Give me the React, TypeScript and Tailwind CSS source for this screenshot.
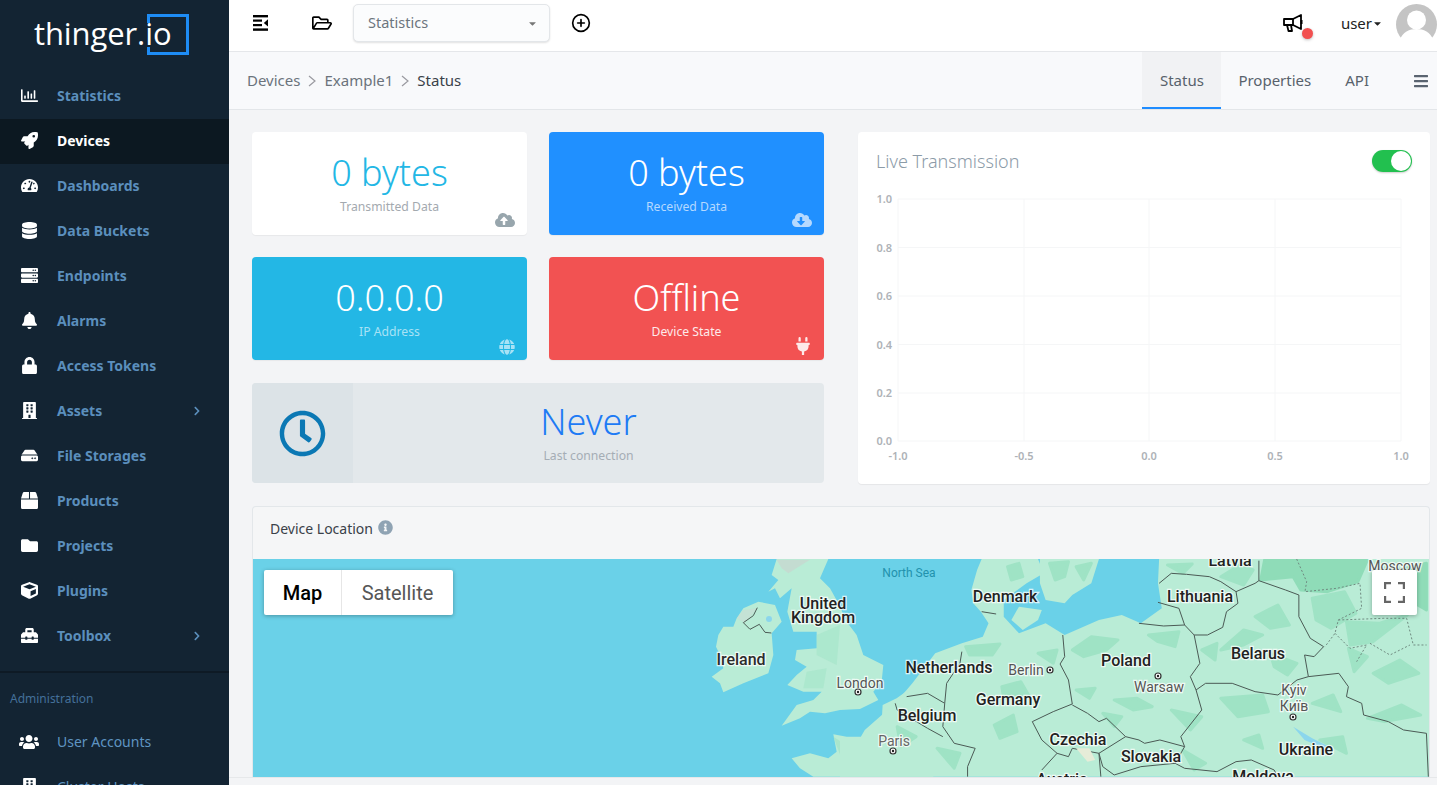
import React from "react";
import {
  FaRegChartBar, FaRocket, FaTachometerAlt, FaDatabase, FaServer, FaBell, FaLock, FaBuilding, FaHdd, FaBox, FaFolder, FaCube, FaToolbox, FaUsers, FaChevronRight,
  FaCloudUploadAlt, FaCloudDownloadAlt, FaGlobe, FaPlug, FaRegClock, FaInfoCircle, FaBars, FaRegFolderOpen, FaCaretDown,
} from "react-icons/fa";
import { CirclePlus } from "lucide-react";

const nav = [
  { label: "Statistics", icon: FaRegChartBar },
  { label: "Devices", icon: FaRocket, active: true },
  { label: "Dashboards", icon: FaTachometerAlt },
  { label: "Data Buckets", icon: FaDatabase },
  { label: "Endpoints", icon: FaServer },
  { label: "Alarms", icon: FaBell },
  { label: "Access Tokens", icon: FaLock },
  { label: "Assets", icon: FaBuilding, more: true },
  { label: "File Storages", icon: FaHdd },
  { label: "Products", icon: FaBox },
  { label: "Projects", icon: FaFolder },
  { label: "Plugins", icon: FaCube },
  { label: "Toolbox", icon: FaToolbox, more: true },
];

function Sidebar() {
  return (
    <aside className="w-[229px] shrink-0 h-full overflow-hidden bg-[#132433] font-['Noto_Sans',sans-serif]">
      <div className="relative h-[74px]">
        <div className="pl-[34px] pt-[13px] text-[31px] leading-[40px] font-medium text-white font-['Open_Sans',sans-serif] tracking-[-0.1px]">thinger.io</div>
        <svg className="absolute left-[147px] top-[14px]" width="42" height="41" viewBox="0 0 42 41" fill="none" stroke="#1e8cf5" strokeWidth="3">
          <path d="M1.5 9V1.5H40.5V39.5H1.5V33" />
        </svg>
      </div>
      {nav.map((n) => (
        <div key={n.label} className={`flex items-center h-[45px] pb-[2px] pl-[20px] pr-[27px] ${n.active ? "bg-[#0c1821]" : ""}`}>
          <span className="w-[18px] mr-[19px] shrink-0 flex justify-center text-white"><n.icon size={17} /></span>
          <span className={`text-[14px] font-bold flex-1 ${n.active ? "text-white" : "text-[#5b8fbd]"}`}>{n.label}</span>
          {n.more && <FaChevronRight size={10} className="text-[#5b8fbd]" />}
        </div>
      ))}
      <div className="mt-[12px] border-t-2 border-[#0e1a25] h-[48px] pl-[10px] pt-[17px] text-[12px] leading-[18px] text-[#44709a]">Administration</div>
      <div className="flex items-center h-[45px] pl-[20px]">
        <span className="w-[18px] mr-[19px] shrink-0 flex justify-center text-white"><FaUsers size={20} className="shrink-0" /></span>
        <span className="text-[14px] text-[#5f94c2]">User Accounts</span>
      </div>
      <div className="flex items-center h-[45px] pl-[20px]">
        <span className="w-[18px] mr-[19px] shrink-0 flex justify-center text-white"><FaBuilding size={17} /></span>
        <span className="text-[14px] text-[#5f94c2]">Cluster Hosts</span>
      </div>
    </aside>
  );
}

function TopBar() {
  return (
    <header className="h-[52px] shrink-0 bg-white border-b border-[#e5e7ea] flex items-center pl-[24px] pb-[5px]">
      <svg width="17" height="16" viewBox="0 0 17 16" className="text-black mr-[42px]" fill="currentColor">
        <rect x="0" y="0" width="15" height="2.4" />
        <rect x="0" y="4.5" width="9" height="2.2" />
        <rect x="0" y="9" width="9" height="2.2" />
        <rect x="0" y="13.4" width="15" height="2.4" />
        <path d="M15 4.2V11.6L10.8 7.9Z" />
      </svg>
      <FaRegFolderOpen size={20} className="text-black mr-[21px]" />
      <div className="w-[197px] h-[38px] rounded-[5px] border border-[#e3e6e9] bg-[#fbfcfd] shadow-[0_1px_2px_rgba(0,0,0,0.12)] flex items-center justify-between pl-[14px] pr-[11px] text-[14.5px] text-[#6c757d]">
        <span>Statistics</span>
        <FaCaretDown size={11} className="text-[#777]" />
      </div>
      <CirclePlus size={20} strokeWidth={2} className="text-black ml-[21px]" />
      <div className="flex-1" />
      <svg width="20" height="18" viewBox="0 0 20 18" fill="none" stroke="#000" strokeWidth="1.8" strokeLinejoin="round">
        <path d="M1 5H10L18 1V15L10 11H1Z" />
        <path d="M4 11L5.5 17H9L8 11" />
        <path d="M10 5V11" />
        <path d="M18.6 6V10" />
      </svg>
      <div className="relative w-0 h-0">
        <span className="absolute left-[-1px] top-[5px] w-[11px] h-[11px] rounded-full bg-[#f25050] shadow-[0_1px_3px_rgba(0,0,0,0.25)]" />
      </div>
      <div className="ml-[38px] flex items-center text-[15px] text-[#222]">
        user<FaCaretDown size={11} className="text-[#222]" />
      </div>
      <svg width="41" height="41" viewBox="0 0 41 41" className="ml-[13px] mt-[3px]">
        <circle cx="20.5" cy="20.5" r="20.5" fill="#c4c4c4" />
        <circle cx="20.5" cy="16" r="9.5" fill="#fff" />
        <path d="M4 36C6 28 14 25 20.5 25S35 28 37 36L30 41H11Z" fill="#fff" />
      </svg>
    </header>
  );
}

function Crumbs() {
  return (
    <div className="h-[58px] shrink-0 bg-[#f8f9fb] border-b border-[#e3e6e9] flex items-center pl-[18px] text-[15px]">
      <span className="text-[#6b737c]">Devices</span>
      <svg width="10" height="12" viewBox="0 0 10 12" className="mx-[7px]" fill="none" stroke="#9a9aa0" strokeWidth="1.2"><path d="M2 1L8 6L2 11" /></svg>
      <span className="text-[#6b737c]">Example1</span>
      <svg width="10" height="12" viewBox="0 0 10 12" className="mx-[7px]" fill="none" stroke="#9a9aa0" strokeWidth="1.2"><path d="M2 1L8 6L2 11" /></svg>
      <span className="text-[#3a4149]">Status</span>
      <div className="flex-1" />
      <div className="h-full w-[79px] pt-[2px] flex items-center justify-center bg-[#f1f2f4] border-b-2 border-[#1e8cff] text-[#58626c]">Status</div>
      <div className="h-full flex items-center ml-[17px] text-[#58626c]">Properties</div>
      <div className="h-full flex items-center ml-[34px] text-[#58626c]">API</div>
      <FaBars size={16} className="text-[#5a6470] ml-[44px] mr-[8px]" />
    </div>
  );
}

function Stat({ value, label, icon: Icon, box, val, sub, ic, size = 20 }: { value: string; label: string; icon: React.ComponentType<{ size?: number; className?: string }>; box: string; val: string; sub: string; ic: string; size?: number }) {
  return (
    <div className={`relative h-[103px] rounded-[4px] text-center shadow-[0_1px_1px_rgba(0,0,0,0.05)] ${box}`}>
      <div className={`pt-[15px] text-[36px] leading-[52px] font-light ${val}`}>{value}</div>
      <div className={`text-[12.2px] leading-[14px] mt-[1px] ${sub}`}>{label}</div>
      <Icon size={size} className={`absolute right-[12px] bottom-[5px] ${ic}`} />
    </div>
  );
}

function Chart() {
  const xs = [898, 1024, 1149, 1275, 1401];
  const ys = [199, 247.5, 296, 344.5, 393, 441];
  const xl = ["-1.0", "-0.5", "0.0", "0.5", "1.0"];
  const yl = ["1.0", "0.8", "0.6", "0.4", "0.2", "0.0"];
  return (
    <svg viewBox="858 170 572 314" className="absolute left-0 top-[38px] w-[572px] h-[314px]" fontFamily="'Noto Sans',sans-serif" fontSize="11" fontWeight="600" fill="#aeb2b7">
      {xs.map((x) => <line key={x} x1={x} x2={x} y1={199} y2={441} stroke="#f5f6f7" />)}
      {ys.map((y) => <line key={y} x1={898} x2={1401} y1={y} y2={y} stroke="#f5f6f7" />)}
      {ys.map((y, i) => <text key={y} x={892} y={y + 4} textAnchor="end">{yl[i]}</text>)}
      {xs.map((x, i) => <text key={x} x={x} y={460} textAnchor="middle">{xl[i]}</text>)}
    </svg>
  );
}

const LAND = "#b9ecd6";
const DARK = "#9fe3c5";
const DEEP = "#8fdcb8";
const LINE = "#4b5a55";

const patches8 = [
  "M610 330L660 290L730 300L700 330L640 350Z", "M520 340L570 330L560 370Z", "M330 320L420 312L400 345L340 345Z", "M620 450L670 445L655 475Z",
  "M720 480L780 475L820 500L770 510Z", "M870 510L950 530L920 570Z", "M810 285L890 275L880 320L835 305Z", "M1000 330L1060 270L1110 285L1060 315Z",
  "M1090 230L1150 195L1180 255L1130 265Z", "M1130 340L1200 370L1175 405L1140 380Z", "M1000 475L1110 465L1125 515L1045 530Z", "M1240 490L1295 465L1315 515Z",
  "M1385 535L1475 495L1525 525L1430 545Z", "M900 630L960 670L930 690Z", "M405 555L455 525L465 575L420 595Z", "M255 625L315 640L300 685Z",
  "M550 70L600 65L590 110L565 120Z", "M620 80L660 70L640 120Z", "M1240 175L1325 155L1355 220L1290 265L1250 240Z",
  "M1330 245L1415 250L1490 225L1400 305L1340 315Z", "M1000 110L1050 75L1085 90L1060 135Z", "M1335 325L1385 350L1350 395Z",
  "M860 75L925 72L900 100Z", "M425 440L475 425L495 465L430 475Z", "M950 330L990 310L985 360Z", "M1260 600L1320 590L1330 640Z", "M1060 600L1100 585L1110 625Z",
  "M440 80L470 70L480 110L450 120Z", "M690 520L740 530L720 560Z", "M150 560L200 590L160 620Z", "M1400 400L1470 360L1520 400L1440 430Z",
];

const deep8 = [
  "M1115 60L1385 60L1360 125L1280 155L1210 150L1190 110L1105 120Z",
  "M1430 100L1540 70L1540 210L1480 170L1420 170Z",
];

const lines8 = [
  "M838 130L870 100L910 103L970 110L1000 125L1040 155L1090 130L1100 122L1100 62",
  "M1100 122L1170 150L1205 165L1205 230L1235 295L1270 320L1245 350L1220 345L1230 410L1310 400L1335 440L1330 470L1370 490L1375 525L1440 545L1480 570L1540 580L1545 710",
  "M935 450L960 430L1030 430L1090 455L1150 465L1200 420L1230 410",
  "M835 187L890 205L905 255L930 285L965 285L1005 262L1015 215L1045 190L1040 155",
  "M785 250L850 258L905 255",
  "M930 285L945 370L920 410L935 450L950 510L895 590L905 620",
  "M585 285L590 350L578 372L600 420L610 492",
  "M610 492L560 515L505 545L530 600L570 640L600 650L610 625L680 640L750 590L700 535L680 545L650 520L610 495",
  "M680 640L690 680L720 705L790 680L880 670L905 685",
  "M750 590L785 600L800 610L840 600L905 620L880 670",
  "M320 335L315 370L280 430L275 490L270 560L300 610L355 625L335 680L335 710",
  "M145 490L150 510L230 565L270 590",
  "M175 470L230 460L275 490",
  "M905 685L990 695L1040 665L1080 660L1140 690L1150 710",
  "M372 215L410 222",
  "M530 690L570 640",
  "M680 640L685 710",
];

const dashed11 = [
  "M440 12L470 80L465 110L560 100L630 85L635 160L565 195L555 235L525 275",
  "M565 195L700 190L770 190L790 270L830 270",
  "M555 235L600 280L650 270L620 320",
  "M660 265L720 300L780 270",
];

const labels: [string, number, number, number, string, number][] = [
  ["United", 823, 609, 16, "#222", 500],
  ["Kingdom", 823, 623, 16, "#222", 500],
  ["Ireland", 741, 665, 16, "#2c2c2c", 500],
  ["Denmark", 1005, 602, 16, "#222", 500],
  ["Netherlands", 949, 673, 16, "#222", 500],
  ["Germany", 1008, 705, 16, "#222", 500],
  ["Belgium", 927, 721, 16, "#222", 500],
  ["Poland", 1126, 666, 16, "#222", 500],
  ["Czechia", 1078, 745, 16, "#222", 500],
  ["Slovakia", 1151, 762, 16, "#222", 500],
  ["Ukraine", 1306, 755, 16, "#222", 500],
  ["Belarus", 1258, 659, 16, "#222", 500],
  ["Lithuania", 1200, 602, 16, "#222", 500],
  ["Latvia", 1230, 566, 16, "#222", 500],
  ["Moldova", 1263, 782, 16, "#222", 500],
  ["Austria", 1062, 785, 16, "#222", 500],
  ["London", 860, 688, 14, "#555", 400],
  ["Paris", 894, 746, 14, "#666", 400],
  ["Berlin", 1026, 675, 14, "#555", 400],
  ["Warsaw", 1159, 692, 14, "#555", 400],
  ["Kyiv", 1294, 695, 14, "#555", 400],
  ["Київ", 1294, 711, 14, "#555", 400],
  ["Moscow", 1395, 571, 14, "#555", 400],
];

const cities = [[858, 692], [893, 751], [1050, 670], [1158, 676], [1293, 717]];

function MapArt() {
  return (
    <svg viewBox="253 559 1176 218" className="block w-full h-full bg-[#6ad1e8]" fontFamily="Roboto,sans-serif">
      <g transform="translate(700 555) scale(0.3333)" fill={LAND}>
        <path d="M110 190L130 160L175 140L225 150L245 200L215 235L220 300L205 355L130 385L70 412L60 385L35 365L70 340L60 300L48 275L55 240L70 215L100 215Z" />
        <path d="M230 12L385 12L360 70L390 100L415 145L440 200L470 240L490 300L550 330L545 380L520 410L535 435L480 462L420 465L375 475L330 470L300 490L245 512L290 450L340 435L365 410L310 410L262 390L290 360L320 335L285 315L290 285L350 280L350 230L280 230L262 170L275 100L240 130L225 100L205 110L235 75L215 60Z" />
        <path d="M275 610L330 595L385 610L410 590L400 538L440 545L485 545L545 500L548 450L590 430L660 380L700 380L700 665L340 665L300 640Z" />
        <path d="M350 240L420 210L410 330L350 300Z" fill={DARK} opacity="0.5" />
        <path d="M320 350L380 340L370 400L310 400Z" fill={DARK} opacity="0.5" />
        <path d="M230 14L330 14L265 55L245 40Z" fill="#c9d5cf" opacity="0.7" />
        <path d="M400 545L470 590L490 610L430 625Z" fill={DARK} opacity="0.6" />
        <path d="M130 165L172 160L135 203L110 190Z" fill="#cfd8d3" opacity="0.5" />
        <circle cx="207" cy="192" r="9" fill="#8bd6ec" />
        <path d="M172 158L160 182L130 203L150 223L178 208L195 232L214 234" fill="none" stroke={LINE} strokeWidth="3" />
      </g>
      <g transform="translate(840 540) scale(0.3808 0.3333)">
        <path fill={LAND} d="M0 710L0 600L50 600L65 570L145 490L190 430L250 340L320 310L375 290L390 250L370 215L350 190L345 150L360 90L372 57L520 57L535 100L490 130L430 180L430 230L470 280L540 250L590 285L680 240L740 225L790 250L845 205L835 130L838 57L1568 57L1568 710Z" />
        <path fill={LAND} d="M525 57L680 57L660 130L610 165L590 190L540 180L525 130Z" />
        <path fill={LAND} d="M470 200L530 210L520 240L480 270L450 240Z" />
        {deep8.map((d) => <path key={d} d={d} fill={DEEP} stroke={DEEP} strokeWidth="3" strokeLinejoin="round" vectorEffect="non-scaling-stroke" />)}
        {patches8.map((d) => <path key={d} d={d} fill={DARK} stroke={DARK} strokeWidth="3" strokeLinejoin="round" vectorEffect="non-scaling-stroke" />)}
        {lines8.map((d) => <path key={d} d={d} fill="none" stroke={LINE} strokeWidth="1" vectorEffect="non-scaling-stroke" />)}
        <path d="M620 625L655 625L670 660L650 665Z" fill="#e6ecd8" />
        <path d="M1190 560L1240 595L1285 620L1270 625L1220 600Z" fill="#8bd6ec" />
      </g>
      <g transform="translate(1150 555) scale(0.3333)">
        {dashed11.map((d) => <path key={d} d={d} fill="none" stroke="#6f8a80" strokeWidth="1" strokeDasharray="2 2" vectorEffect="non-scaling-stroke" />)}
      </g>
      <text x="909" y="577" textAnchor="middle" fontSize="12" fill="#2292ad">North Sea</text>
      {labels.map(([t, x, y, s, c, w]) => (
        <text key={t} x={x} y={y} textAnchor="middle" fontSize={s} fontWeight={w} fill={c} stroke="#ffffff" strokeOpacity="0.75" strokeWidth="2.5" paintOrder="stroke">{t}</text>
      ))}
      {cities.map(([x, y]) => (
        <g key={x}>
          <circle cx={x} cy={y} r="3" fill="#fff" stroke="#333" strokeWidth="1.2" />
          <circle cx={x} cy={y} r="1.2" fill="#222" />
        </g>
      ))}
    </svg>
  );
}

function MapCard() {
  return (
    <div className="flex-1 min-h-0 mt-[22px] ml-[23px] mr-[7px] rounded-t-[4px] border-x border-t border-[#e3e7ea] bg-[#f5f6f7] flex flex-col overflow-hidden">
      <div className="h-[52px] shrink-0 pl-[17px] pt-[11px] flex items-start gap-[5px] text-[14px] leading-[22px] text-[#3a4149]">
        Device Location <FaInfoCircle size={15} className="text-[#8fa3b3] mt-[2px]" />
      </div>
      <div className="relative flex-1 min-h-0">
        <MapArt />
        <div className="absolute left-[11px] top-[11px] h-[45px] flex bg-white rounded-[2px] shadow-[0_1px_4px_rgba(0,0,0,0.3)] text-[20px] font-['Roboto',sans-serif]">
          <div className="w-[78px] flex items-center justify-center font-medium text-black border-r border-[#e6e6e6]">Map</div>
          <div className="w-[111px] flex items-center justify-center text-[#565656]">Satellite</div>
        </div>
        <div className="absolute right-[12px] top-[11px] w-[45px] h-[45px] bg-white rounded-[2px] shadow-[0_1px_4px_rgba(0,0,0,0.3)] flex items-center justify-center">
          <svg width="21" height="21" viewBox="0 0 21 21" fill="none" stroke="#666" strokeWidth="2.4">
            <path d="M1 7V1H7M14 1H20V7M20 14V20H14M7 20H1V14" />
          </svg>
        </div>
      </div>
    </div>
  );
}

export default function App() {
  return (
    <div className="w-[1437px] h-[785px] flex overflow-hidden bg-[#f3f4f6] font-['Noto_Sans',sans-serif]">
      <Sidebar />
      <main className="flex-1 min-w-0 flex flex-col h-full">
        <TopBar />
        <Crumbs />
        <div className="flex-1 min-h-0 pt-[22px] flex flex-col">
          <div className="flex gap-[34px] pl-[23px] pr-[7px] shrink-0">
            <div className="w-[572px]">
              <div className="grid grid-cols-2 gap-x-[22px] gap-y-[22px]">
                <Stat value="0 bytes" label="Transmitted Data" icon={FaCloudUploadAlt} box="bg-white" val="text-[#23b7e5]" sub="text-[#a3a9af]" ic="text-[#98a6ad]" />
                <Stat value="0 bytes" label="Received Data" icon={FaCloudDownloadAlt} box="bg-[#2090ff]" val="text-white" sub="text-[#b5d9ff]" ic="text-[#b5d9ff]" />
                <Stat value="0.0.0.0" label="IP Address" icon={FaGlobe} size={16} box="bg-[#23b7e5]" val="text-white" sub="text-[#a8e2f5]" ic="text-[#a8e2f5]" />
                <Stat value="Offline" label="Device State" icon={FaPlug} size={18} box="bg-[#f25252]" val="text-white" sub="text-[#fdeaea]" ic="text-[#fdeaea]" />
              </div>
              <div className="mt-[23px] h-[100px] rounded-[4px] bg-[#e3e8eb] flex overflow-hidden">
                <div className="w-[101px] shrink-0 bg-[#dce3e7] flex items-center justify-center">
                  <FaRegClock size={47} className="text-[#0b78b4]" />
                </div>
                <div className="flex-1 text-center pt-[13px]">
                  <div className="text-[36px] leading-[52px] font-light text-[#1e7bf5]">Never</div>
                  <div className="text-[12.2px] leading-[14px] mt-[1px] text-[#a5adb5]">Last connection</div>
                </div>
              </div>
            </div>
            <div className="relative w-[572px] h-[352px] rounded-[4px] bg-white shadow-[0_1px_1px_rgba(0,0,0,0.06)]">
              <div className="flex items-center justify-between pl-[18px] pr-[18px] pt-[17px]">
                <span className="text-[18px] leading-[24px] font-light text-[#8c9ba8]">Live Transmission</span>
                <span className="w-[40px] h-[22px] rounded-full bg-[#22c04f] flex justify-end items-center pr-px shadow-[0_1px_2px_rgba(0,0,0,0.2)]">
                  <span className="w-[20px] h-[20px] rounded-full bg-white" />
                </span>
              </div>
              <Chart />
            </div>
          </div>
          <MapCard />
        </div>
        <div className="h-[8px] shrink-0 bg-[#f3f4f6] border-t border-[#e6e8ea]" />
      </main>
    </div>
  );
}
